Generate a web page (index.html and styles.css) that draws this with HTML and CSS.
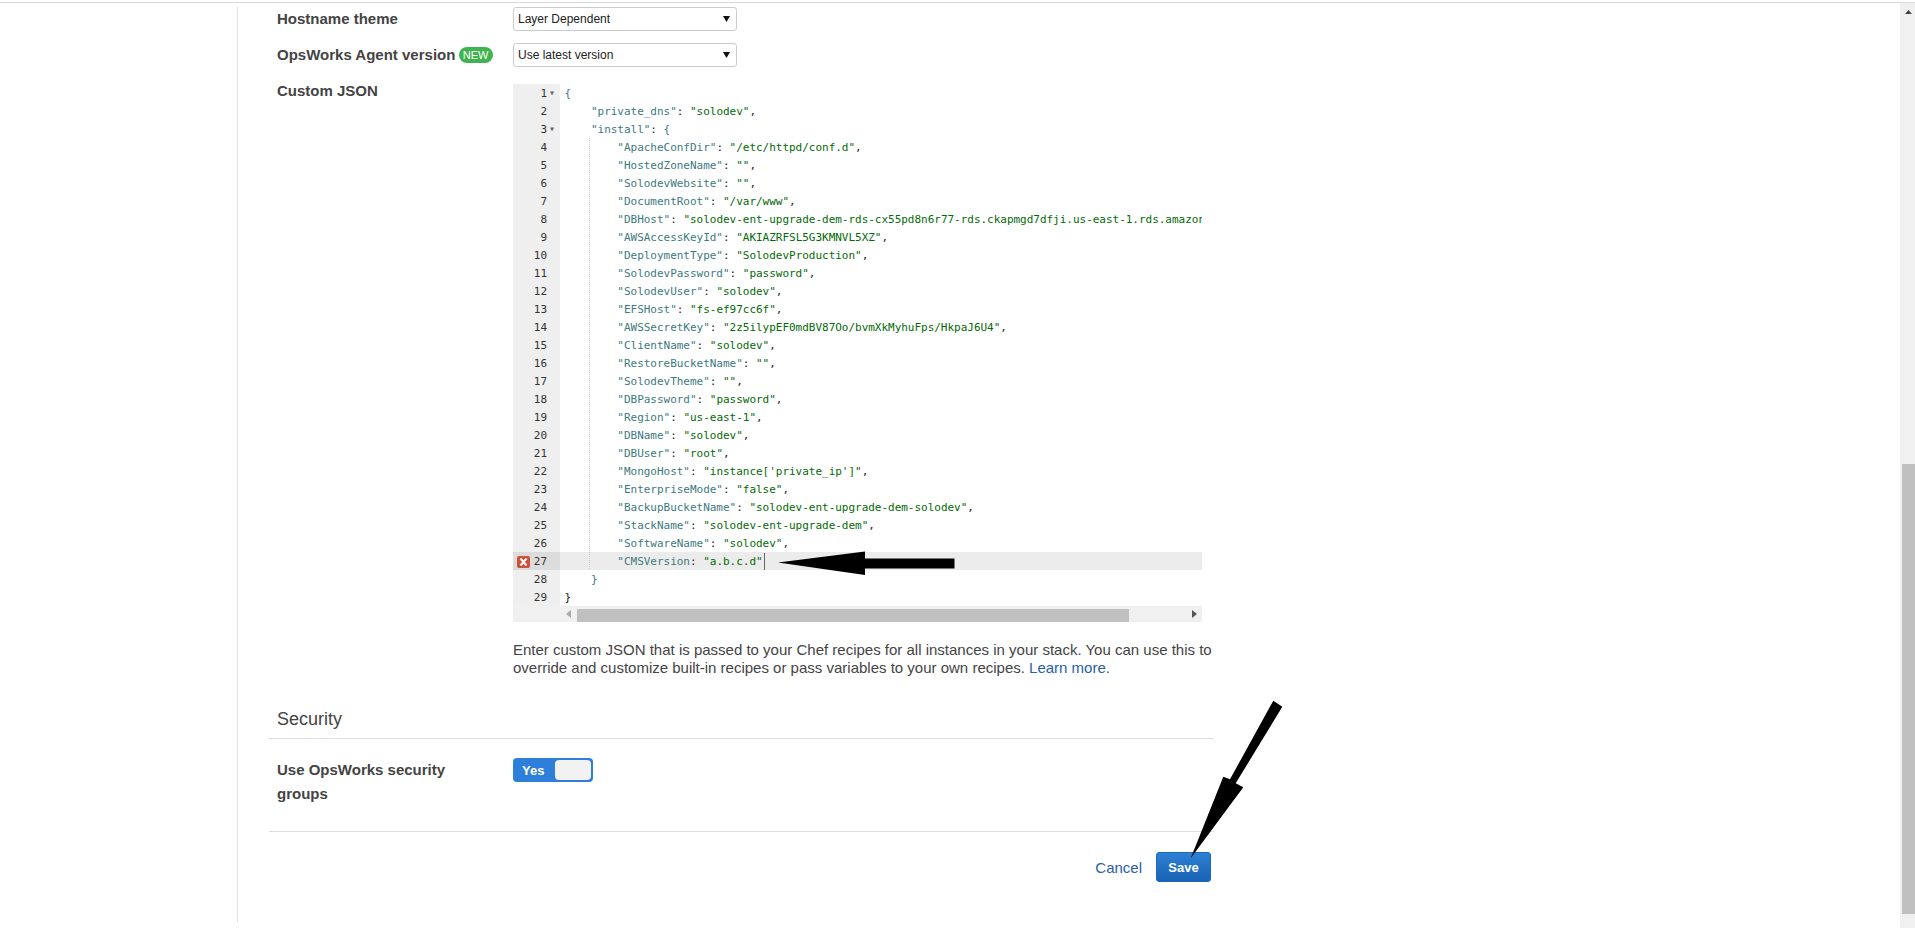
FILE: index.html
```html
<!DOCTYPE html>
<html lang="en">
<head>
<meta charset="utf-8">
<title>Stack settings</title>
<link rel="stylesheet" href="styles.css">
</head>
<body>
<div class="window">
  <main class="main">
    <div class="panel">
      <div class="field first">
        <div class="label">Hostname theme</div>
        <div class="select"><span>Layer Dependent</span><svg class="caret-down" width="7" height="6" viewBox="0 0 7 6"><path d="M0 0h7L3.500 6z"/></svg></div>
      </div>
      <div class="field">
        <div class="label">OpsWorks Agent version <span class="badge">NEW</span></div>
        <div class="select"><span>Use latest version</span><svg class="caret-down" width="7" height="6" viewBox="0 0 7 6"><path d="M0 0h7L3.500 6z"/></svg></div>
      </div>
      <div class="field json">
        <div class="label raised">Custom JSON</div>
        <div class="control">
          <div class="editor">
            <div class="line"><div class="gutter"><span class="num">1</span><span class="fold">&#9662;</span></div><div class="code"><span class="p">{</span></div></div>
            <div class="line"><div class="gutter"><span class="num">2</span></div><div class="code">    <span class="k">"private_dns"</span>: <span class="s">"solodev"</span>,</div></div>
            <div class="line"><div class="gutter"><span class="num">3</span><span class="fold">&#9662;</span></div><div class="code">    <span class="k">"install"</span>: <span class="p">{</span></div></div>
            <div class="line"><div class="gutter"><span class="num">4</span></div><div class="code guide">        <span class="k">"ApacheConfDir"</span>: <span class="s">"/etc/httpd/conf.d"</span>,</div></div>
            <div class="line"><div class="gutter"><span class="num">5</span></div><div class="code guide">        <span class="k">"HostedZoneName"</span>: <span class="s">""</span>,</div></div>
            <div class="line"><div class="gutter"><span class="num">6</span></div><div class="code guide">        <span class="k">"SolodevWebsite"</span>: <span class="s">""</span>,</div></div>
            <div class="line"><div class="gutter"><span class="num">7</span></div><div class="code guide">        <span class="k">"DocumentRoot"</span>: <span class="s">"/var/www"</span>,</div></div>
            <div class="line"><div class="gutter"><span class="num">8</span></div><div class="code guide">        <span class="k">"DBHost"</span>: <span class="s">"solodev-ent-upgrade-dem-rds-cx55pd8n6r77-rds.ckapmgd7dfji.us-east-1.rds.amazonaws.com"</span>,</div></div>
            <div class="line"><div class="gutter"><span class="num">9</span></div><div class="code guide">        <span class="k">"AWSAccessKeyId"</span>: <span class="s">"AKIAZRFSL5G3KMNVL5XZ"</span>,</div></div>
            <div class="line"><div class="gutter"><span class="num">10</span></div><div class="code guide">        <span class="k">"DeploymentType"</span>: <span class="s">"SolodevProduction"</span>,</div></div>
            <div class="line"><div class="gutter"><span class="num">11</span></div><div class="code guide">        <span class="k">"SolodevPassword"</span>: <span class="s">"password"</span>,</div></div>
            <div class="line"><div class="gutter"><span class="num">12</span></div><div class="code guide">        <span class="k">"SolodevUser"</span>: <span class="s">"solodev"</span>,</div></div>
            <div class="line"><div class="gutter"><span class="num">13</span></div><div class="code guide">        <span class="k">"EFSHost"</span>: <span class="s">"fs-ef97cc6f"</span>,</div></div>
            <div class="line"><div class="gutter"><span class="num">14</span></div><div class="code guide">        <span class="k">"AWSSecretKey"</span>: <span class="s">"2z5ilypEF0mdBV87Oo/bvmXkMyhuFps/HkpaJ6U4"</span>,</div></div>
            <div class="line"><div class="gutter"><span class="num">15</span></div><div class="code guide">        <span class="k">"ClientName"</span>: <span class="s">"solodev"</span>,</div></div>
            <div class="line"><div class="gutter"><span class="num">16</span></div><div class="code guide">        <span class="k">"RestoreBucketName"</span>: <span class="s">""</span>,</div></div>
            <div class="line"><div class="gutter"><span class="num">17</span></div><div class="code guide">        <span class="k">"SolodevTheme"</span>: <span class="s">""</span>,</div></div>
            <div class="line"><div class="gutter"><span class="num">18</span></div><div class="code guide">        <span class="k">"DBPassword"</span>: <span class="s">"password"</span>,</div></div>
            <div class="line"><div class="gutter"><span class="num">19</span></div><div class="code guide">        <span class="k">"Region"</span>: <span class="s">"us-east-1"</span>,</div></div>
            <div class="line"><div class="gutter"><span class="num">20</span></div><div class="code guide">        <span class="k">"DBName"</span>: <span class="s">"solodev"</span>,</div></div>
            <div class="line"><div class="gutter"><span class="num">21</span></div><div class="code guide">        <span class="k">"DBUser"</span>: <span class="s">"root"</span>,</div></div>
            <div class="line"><div class="gutter"><span class="num">22</span></div><div class="code guide">        <span class="k">"MongoHost"</span>: <span class="s">"instance['private_ip']"</span>,</div></div>
            <div class="line"><div class="gutter"><span class="num">23</span></div><div class="code guide">        <span class="k">"EnterpriseMode"</span>: <span class="s">"false"</span>,</div></div>
            <div class="line"><div class="gutter"><span class="num">24</span></div><div class="code guide">        <span class="k">"BackupBucketName"</span>: <span class="s">"solodev-ent-upgrade-dem-solodev"</span>,</div></div>
            <div class="line"><div class="gutter"><span class="num">25</span></div><div class="code guide">        <span class="k">"StackName"</span>: <span class="s">"solodev-ent-upgrade-dem"</span>,</div></div>
            <div class="line"><div class="gutter"><span class="num">26</span></div><div class="code guide">        <span class="k">"SoftwareName"</span>: <span class="s">"solodev"</span>,</div></div>
            <div class="line active"><div class="gutter"><svg class="err" width="13" height="12" viewBox="0 0 13 12"><rect width="13" height="12" rx="2" fill="#d2503a"/><path d="M3.500 2.500l6 7m0-7l-6 7" stroke="#fff" stroke-width="2" fill="none"/></svg><span class="num">27</span></div><div class="code guide">        <span class="k">"CMSVersion</span>: <span class="s">"a.b.c.d"</span><span class="cursor"></span></div></div>
            <div class="line"><div class="gutter"><span class="num">28</span></div><div class="code">    <span class="p">}</span></div></div>
            <div class="line"><div class="gutter"><span class="num">29</span></div><div class="code"><span class="q">}</span></div></div>
            <div class="hscroll">
              <svg class="h-left" width="5" height="8" viewBox="0 0 5 8"><path d="M5 0v8L0 4z"/></svg>
              <div class="h-thumb"></div>
              <svg class="h-right" width="5" height="8" viewBox="0 0 5 8"><path d="M0 0v8l5-4z"/></svg>
            </div>
          </div>
          <p class="help">Enter custom JSON that is passed to your Chef recipes for all instances in your stack. You can use this to override and customize built-in recipes or pass variables to your own recipes. <a class="link" href="#">Learn more.</a></p>
        </div>
      </div>
      <h2 class="section">Security</h2>
      <div class="field security">
        <div class="label wrap">Use OpsWorks security groups</div>
        <div class="toggle"><span class="yes">Yes</span><span class="knob"></span></div>
      </div>
      <div class="footer">
        <a class="link cancel" href="#">Cancel</a>
        <button class="save" type="button">Save</button>
      </div>
    </div>
  </main>
  <div class="pagebar">
    <svg class="up" width="7" height="4" viewBox="0 0 7 4"><path d="M3.500 0L7 4H0z"/></svg>
    <div class="thumb"></div>
  </div>
</div>
<svg class="annotations" width="1915" height="928" viewBox="0 0 1915 928">
  <path d="M778 562.500L865 551.500V558.500H954.500V568.500H865V575z"/>
  <path d="M1273.300 700.700L1282.300 706.700L1235.700 783.300L1243.300 787.300L1190.700 858.300L1223.300 776.700L1230 779.300z"/>
</svg>
</body>
</html>
```

FILE: styles.css
```css
* { box-sizing: border-box; }
html, body { margin: 0; height: 928px; overflow: hidden; background: #fff; }
body { font-family: "Liberation Sans", Arial, sans-serif; font-size: 14px; color: #444; position: relative; }

.window { display: flex; height: 928px; padding-top: 2px; }
.window::before { content: ""; position: absolute; left: 0; right: 0; top: 2px; height: 1px; background: #d8d8d8; }

.main { flex: 1; min-width: 0; padding-top: 1px; }
.panel { margin-left: 237px; width: 977px; height: 915px; border-left: 1px solid #e0e0e0; padding-left: 39px; }

.field { display: flex; margin-top: 12px; }
.field.first { margin-top: 4px; }
.field.json { margin-top: 17px; }
.label { width: 236px; flex: none; font-size: 15px; font-weight: 700; line-height: 24px; color: #444; white-space: nowrap; }
.label.wrap { white-space: normal; padding-right: 40px; }
.label.raised { margin-top: -5px; }
.control { width: 700px; }

.badge { display: inline-block; vertical-align: 1px; width: 34px; height: 16px; margin-left: -1px; border-radius: 8px; background: #3fb34f; color: #fff; font-size: 11px; font-weight: 400; line-height: 16px; text-align: center; }

.select { width: 224px; height: 24px; display: flex; align-items: center; justify-content: space-between; padding: 0 6px 0 4px; border: 1px solid #ccc; border-radius: 3px; background: #fff; color: #222; font-size: 12px; }
.caret-down { fill: #111; }

.editor { width: 689px; font-family: "DejaVu Sans Mono", "Liberation Mono", monospace; font-size: 11px; line-height: 18px; letter-spacing: -0.02px; background: #fff; color: #222; }
.line { display: flex; height: 18px; }
.gutter { position: relative; flex: none; width: 47px; height: 18px; background: #efefef; color: #333; text-align: right; }
.num { position: absolute; right: 13px; top: 1px; }
.fold { position: absolute; left: 36px; top: 0; font-size: 10px; color: #666; }
.err { position: absolute; left: 4px; top: 4px; }
.code { position: relative; flex: 1; min-width: 0; overflow: hidden; white-space: pre; padding: 1px 0 0 4.500px; }
.code.guide { background-image: linear-gradient(#ccc 50%, transparent 50%); background-size: 1px 2px; background-position: 29px 0; background-repeat: repeat-y; }
.line.active .gutter { background: #dcdcdc; }
.line.active .code { background-color: #ececec; }
.k { color: #3d7a80; }
.s { color: #036a07; }
.p { color: #3d7a80; }
.q { color: #222; }
.cursor { display: inline-block; width: 1px; height: 18px; margin-left: 1px; vertical-align: top; background: #666; }

.hscroll { display: flex; align-items: center; height: 16px; padding-left: 53px; background: #f0f0f0; }
.h-left { fill: #aaa; flex: none; }
.h-thumb { width: 552px; height: 13px; margin: 2px 63px 0 6px; flex: none; background: #c0c0c0; }
.h-right { fill: #555; flex: none; }

.help { margin: 19px 0 0; font-size: 15px; line-height: 18px; color: #444; }
.link { color: #2a60a8; text-decoration: none; }

.section { margin: 30px 0 0 -8px; padding: 0 0 7px 8px; height: 32px; border-bottom: 1px solid #ddd; font-size: 18px; font-weight: 400; line-height: 24px; color: #444; }

.field.security { margin-top: 19px; padding-bottom: 25px; border-bottom: 1px solid #ddd; margin-left: -8px; padding-left: 8px; }
.toggle { display: flex; align-items: center; justify-content: space-between; width: 80px; height: 24px; padding: 2px; border-radius: 4px; background: #2d7fd9; }
.yes { padding-left: 7px; color: #fff; font-size: 13px; font-weight: 700; }
.knob { width: 36px; height: 20px; border-radius: 4px; background: #f2f2f2; }

.footer { display: flex; justify-content: flex-end; align-items: center; gap: 14px; margin-top: 20px; padding-right: 3px; }
.cancel { font-size: 15px; margin-top: 1px; }
.save { width: 55px; height: 30px; padding: 0; border: 1px solid #1c68bb; border-radius: 3px; background: linear-gradient(#2d80d4, #1a62b5); color: #fff; font-family: inherit; font-size: 13px; font-weight: 700; }

.pagebar { flex: none; display: flex; flex-direction: column; width: 15px; background: #f0f0f0; padding-top: 8px; }
.up { fill: #444; margin-left: 5px; }
.thumb { width: 13px; height: 450px; margin: auto 0 14px 2px; background: #c0c0c0; }

.annotations { position: absolute; left: 0; top: 0; pointer-events: none; }
```
